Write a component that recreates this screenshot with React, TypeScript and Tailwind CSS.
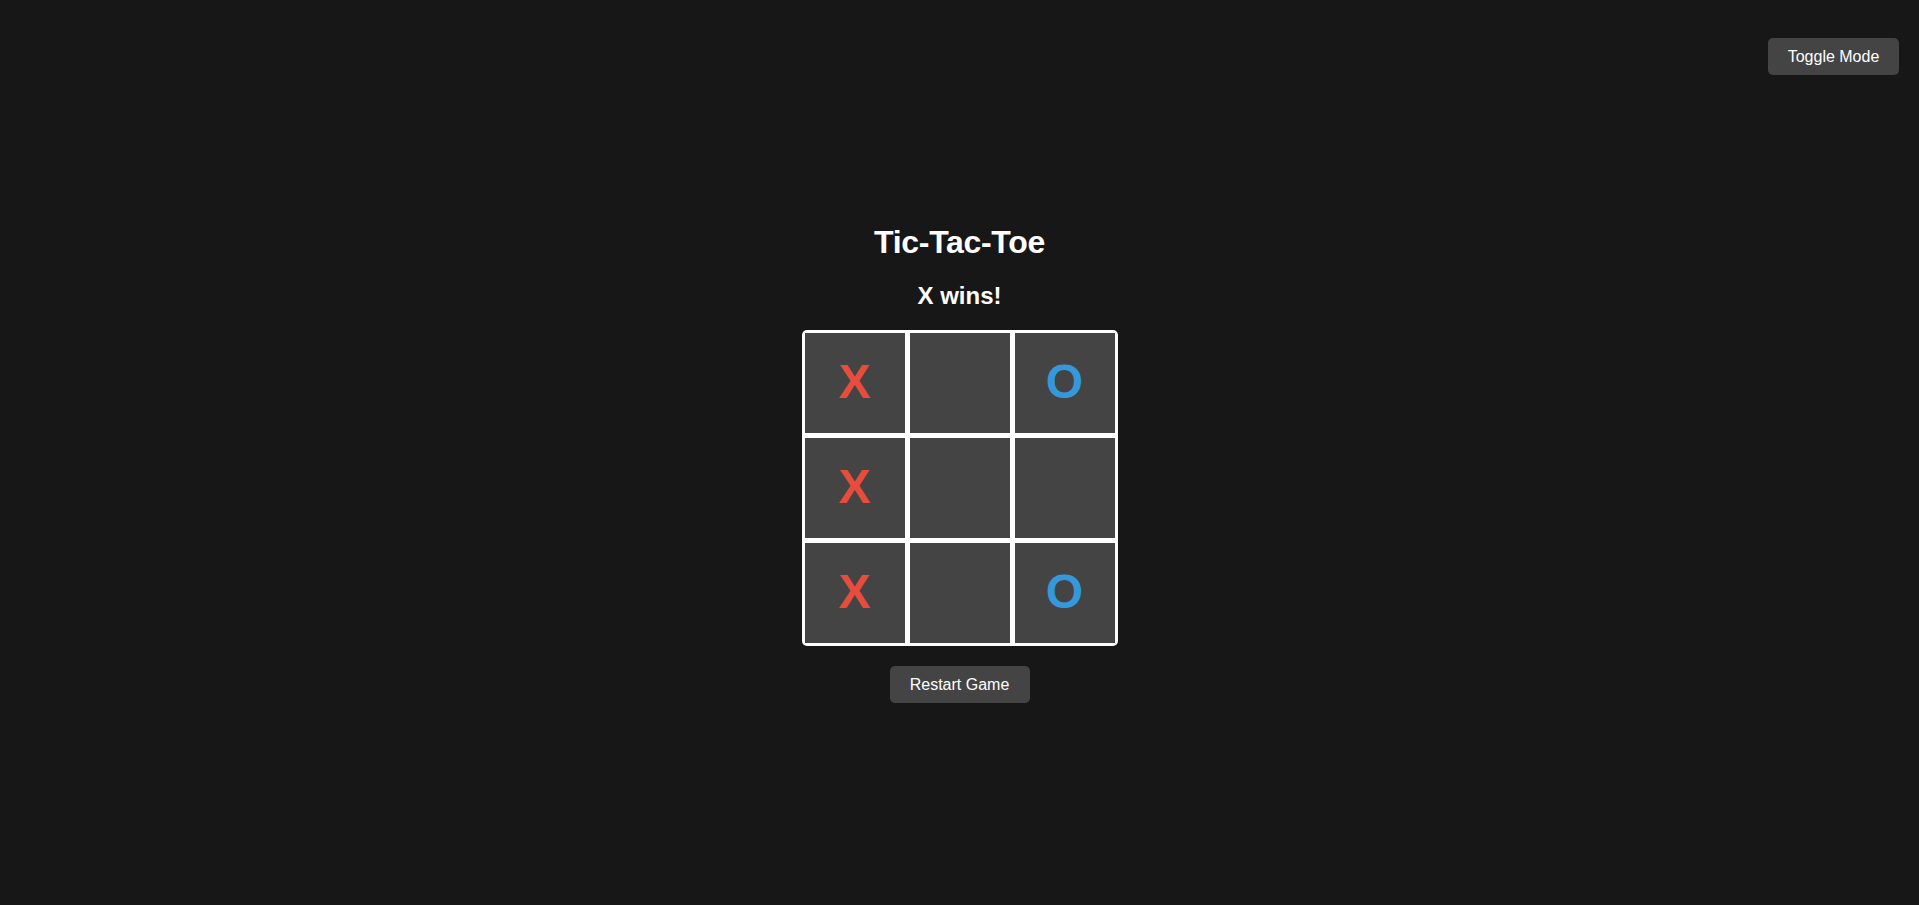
import React from "react";

const board: (string | null)[] = ["X", null, "O", "X", null, null, "X", null, "O"];

export default function App() {
  return (
    <div
      className="min-h-screen w-full bg-[#171717] text-white flex flex-col"
      style={{ fontFamily: '"Liberation Sans", Arial, Helvetica, sans-serif' }}
    >
      <div className="flex justify-end pt-[38px] pr-[20px]">
        <button className="h-[37px] w-[131px] bg-[#444444] text-white text-[16px] leading-[18px] rounded-[5px] cursor-pointer">
          Toggle Mode
        </button>
      </div>
      <div className="flex flex-col items-center mt-[149px]">
        <h1 className="text-[32px] leading-[37px] font-bold tracking-[-0.3px]">Tic-Tac-Toe</h1>
        <h2 className="mt-[21px] text-[24px] leading-[28px] font-bold">X wins!</h2>
        <div className="mt-[20px] grid grid-cols-[100px_100px_100px] grid-rows-[100px_100px_100px] gap-[5px] p-[3px] bg-white rounded-[5px]">
          {board.map((v, i) => (
            <div
              key={i}
              className={
                "bg-[#444444] flex items-center justify-center pb-[2px] text-[48px] font-bold leading-none " +
                (v === "X" ? "text-[#e74c3c]" : "text-[#3498db]")
              }
            >
              {v ?? ""}
            </div>
          ))}
        </div>
        <button className="mt-[20px] h-[37px] w-[140px] bg-[#444444] text-white text-[16px] leading-[18px] rounded-[5px] cursor-pointer">
          Restart Game
        </button>
      </div>
    </div>
  );
}
